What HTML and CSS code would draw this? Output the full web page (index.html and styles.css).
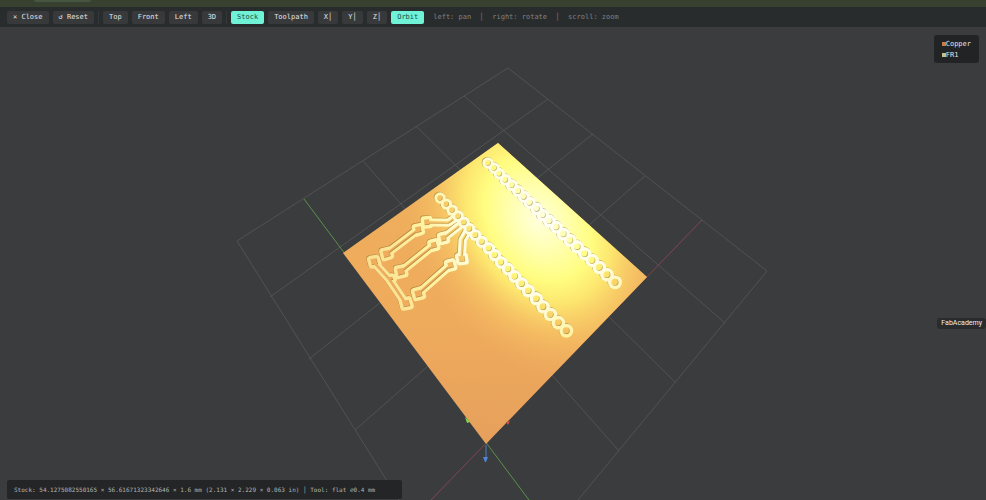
FILE: index.html
```
<!DOCTYPE html>
<html lang="en">
<head>
  <meta charset="UTF-8">
  <meta name="viewport" content="width=device-width, initial-scale=1">
  <title>Stock preview</title>
  <link rel="stylesheet" href="styles.css">
</head>
<body>
  <div class="viewer">
    <div class="top-strip"><span class="tab"></span></div>

    <div class="toolbar">
      <div class="group">
        <button type="button">× Close</button>
        <button type="button">↺ Reset</button>
      </div>
      <div class="group divided">
        <button type="button">Top</button>
        <button type="button">Front</button>
        <button type="button">Left</button>
        <button type="button">3D</button>
      </div>
      <div class="group divided">
        <button type="button" class="active">Stock</button>
        <button type="button">Toolpath</button>
        <button type="button">X│</button>
        <button type="button">Y│</button>
        <button type="button">Z│</button>
        <button type="button" class="active">Orbit</button>
      </div>
      <span class="hint">left: pan &nbsp;│&nbsp; right: rotate &nbsp;│&nbsp; scroll: zoom</span>
    </div>

    <main class="scene">
      <svg class="canvas" viewBox="0 27 986 473" preserveAspectRatio="xMidYMid slice">
        <defs>
          <linearGradient id="copper" gradientUnits="userSpaceOnUse" x1="500" y1="143" x2="486" y2="444">
            <stop offset="0" stop-color="#eeb05c"/>
            <stop offset="0.6" stop-color="#efab5c"/>
            <stop offset="1" stop-color="#e6a05c"/>
          </linearGradient>
          <radialGradient id="glow" gradientUnits="userSpaceOnUse" cx="0" cy="0" r="1" gradientTransform="translate(538 220) rotate(58) scale(172 128)">
            <stop offset="0" stop-color="#ffffdc"/>
            <stop offset="0.18" stop-color="#ffffb4"/>
            <stop offset="0.38" stop-color="#fffd80"/>
            <stop offset="0.52" stop-color="#fff072" stop-opacity="0.85"/>
            <stop offset="0.72" stop-color="#fbd068" stop-opacity="0.5"/>
            <stop offset="1" stop-color="#f2b362" stop-opacity="0"/>
          </radialGradient>
          <radialGradient id="cut" gradientUnits="userSpaceOnUse" cx="540" cy="225" r="190">
            <stop offset="0" stop-color="#fffffa"/>
            <stop offset="0.4" stop-color="#fffde0"/>
            <stop offset="0.6" stop-color="#fff3a2"/>
            <stop offset="1" stop-color="#f9da8c"/>
          </radialGradient>
          <mask id="traces" maskUnits="userSpaceOnUse" x="340" y="140" width="310" height="310">
            <g transform="translate(340 180) scale(0.3333)" fill="none" stroke-linejoin="round">
              <g stroke="#fff" stroke-width="25">
                <path d="M139 222L234 150M260 127L325 128L354 108M181 276L281 196M310 175L371 127M234 342L331 256M365 237L368 180L388 146M101 246L148 298L197 371"/>
              </g>
              <path fill="#fff" stroke="#fff" stroke-width="21" d="M128 214L148 210L152 228L133 234ZM225 142L241 139L245 155L229 160ZM252 119L267 118L269 134L254 136ZM171 267L190 263L195 282L175 287ZM272 189L287 185L291 202L276 206ZM301 168L316 164L320 181L305 185ZM223 334L242 329L248 348L228 353ZM322 249L337 245L342 262L326 266ZM355 229L373 227L376 244L359 246ZM91 238L109 235L114 252L96 256ZM186 363L205 359L211 378L191 382ZM146 292L156 290L160 299L150 302Z"/>
              <g stroke="#000" stroke-width="7">
                <path d="M139 222L234 150M260 127L325 128L354 108M181 276L281 196M310 175L371 127M234 342L331 256M365 237L368 180L388 146M101 246L148 298L197 371"/>
              </g>
              <path fill="#000" d="M128 214L148 210L152 228L133 234ZM225 142L241 139L245 155L229 160ZM252 119L267 118L269 134L254 136ZM171 267L190 263L195 282L175 287ZM272 189L287 185L291 202L276 206ZM301 168L316 164L320 181L305 185ZM223 334L242 329L248 348L228 353ZM322 249L337 245L342 262L326 266ZM355 229L373 227L376 244L359 246ZM91 238L109 235L114 252L96 256ZM186 363L205 359L211 378L191 382ZM146 292L156 290L160 299L150 302Z"/>
            </g>
            <g id="rings"></g>
          </mask>
          <clipPath id="board"><path d="M498 143L647 277L486 444L343 253Z"/></clipPath>
        </defs>

        <g class="grid">
          <path d="M508 68L237 241L399 500M508 68L767 271L578 500"/>
          <path d="M548 99L270 297M593 134L309 359M645 176L355 430"/>
          <path d="M464 96L725 323M416 126L675 382M363 161L619 451"/>
        </g>
        <path class="axis-y" d="M304 199L529 500"/>
        <path class="axis-x" d="M702 220L431 500"/>

        <path fill="url(#copper)" d="M498 143L647 277L486 444L343 253Z"/>
        <g clip-path="url(#board)">
          <rect x="340" y="140" width="310" height="310" fill="url(#glow)"/>
        </g>
        <g transform="translate(-0.6 -0.6)"><rect x="340" y="140" width="310" height="310" fill="#8f7430" opacity="0.6" mask="url(#traces)"/></g>
        <rect x="340" y="140" width="310" height="310" fill="url(#cut)" mask="url(#traces)"/>

        <path class="axis-z" d="M486 445V458"/>
        <path fill="#4d86dc" d="M483 457H488L486 462H485Z"/>
        <path fill="#7be04a" d="M465 417L470 422L467 423Z"/>
        <path fill="#d8503f" d="M506 422L510 421L508 425Z"/>
      </svg>

      <ul class="legend">
        <li><i class="copper"></i>Copper</li>
        <li><i class="fr1"></i>FR1</li>
      </ul>
      <span class="label">FabAcademy</span>
      <div class="status">Stock: 54.1275082550165 × 56.61671323342646 × 1.6 mm (2.131 × 2.229 × 0.063 in) │ Tool: flat ⌀0.4 mm</div>
    </main>
  </div>

<script src="script.js"></script>
</body>
</html>
```
FILE: styles.css
```
* {
  margin: 0;
  padding: 0;
  box-sizing: border-box;
}
body {
  background: #3b3c3e;
  color: #e2e4e4;
  font-family: "DejaVu Sans Mono", monospace;
  font-size: 7px;
  overflow: hidden;
}
.viewer {
  display: flex;
  flex-direction: column;
  height: 100vh;
}
.top-strip {
  height: 7px;
  padding-left: 34px;
  background: #384030;
}
.tab {
  display: block;
  width: 57px;
  height: 2px;
  background: #465640;
  border-radius: 0 0 3px 3px;
}
.toolbar {
  display: flex;
  align-items: center;
  height: 20px;
  padding: 0 7px;
  background: #292c2d;
}
.group {
  display: flex;
  gap: 4px;
}
.divided {
  margin-left: 4px;
  padding-left: 4px;
  border-left: 1px solid #35383a;
}
button {
  height: 13px;
  padding: 0 6px;
  border: 0;
  border-radius: 2px;
  background: #38393b;
  color: #e2e4e4;
  font: inherit;
  line-height: 13px;
  cursor: pointer;
}
button.active {
  background: #6ff2d6;
  color: #1d5048;
}
.hint {
  margin-left: 9px;
  color: #7f8283;
  white-space: nowrap;
}
.scene {
  position: relative;
  flex: 1;
  min-height: 0;
}
.canvas {
  display: block;
  width: 100%;
  height: 100%;
}
.grid {
  fill: none;
  stroke: #5c5c5e;
  stroke-width: 0.7;
}
.axis-x {
  stroke: #8c4550;
  stroke-width: 0.9;
}
.axis-y {
  stroke: #5f9a49;
  stroke-width: 0.9;
}
.axis-z {
  stroke: #4d7cc4;
}
.legend {
  position: absolute;
  top: 8px;
  right: 7px;
  padding: 3px 8px;
  border-radius: 3px;
  background: #222324;
  list-style: none;
}
.legend li {
  display: flex;
  align-items: center;
  height: 11px;
}
.legend i {
  width: 4px;
  height: 4px;
}
.copper {
  background: #c87c48;
}
.fr1 {
  background: #c4c088;
}
.label {
  position: absolute;
  top: 291px;
  right: 0;
  padding: 0 4px;
  border-radius: 3px;
  background: #2a2b2c;
  color: #f0f0f0;
  font-family: Roboto, sans-serif;
  line-height: 11px;
}
.status {
  position: absolute;
  bottom: 1px;
  left: 7px;
  padding: 0 27px 0 7px;
  border-radius: 2px;
  background: #242526;
  color: #b4b6b6;
  font-size: 6px;
  line-height: 19px;
  white-space: nowrap;
}
```
FILE: script.js
```
// drilled rows, [x, y] of each hole
var rows = [
  [[488, 163], [494, 168], [499.3, 173.7], [505.3, 179.7], [511.7, 185], [518, 191], [523.7, 196.7], [529.7, 202.7], [536.7, 208.7], [542.7, 215], [549.3, 221], [556.3, 227], [563.3, 234], [570, 240.3], [577.3, 246.7], [584.7, 253.7], [592, 260.3], [599.3, 267.3], [607, 274.7], [615, 282.3]],
  [[440, 198], [446.3, 204], [452, 210], [458, 216], [463.7, 222.3], [469.3, 228.7], [475.3, 235], [481.7, 241.7], [488.7, 248.3], [494.7, 255], [501, 262.3], [508, 269], [514.7, 276.3], [521.7, 283.7], [528.3, 290.7], [536.3, 298.7], [543, 306.7], [550.3, 314.3], [558.3, 322.7], [566.3, 330.7]]
];

function circle(x, y, r, color) {
  var el = document.createElementNS("http://www.w3.org/2000/svg", "circle");
  el.setAttribute("cx", x);
  el.setAttribute("cy", y);
  el.setAttribute("r", r);
  el.setAttribute("fill", color);
  document.querySelector("#rings").appendChild(el);
}

rows.forEach(function (row) {
  row.forEach(function (p, i) {
    circle(p[0], p[1], 5.7 + i * 0.07, "#fff");
  });
  row.forEach(function (p, i) {
    circle(p[0], p[1], 2.7 + i * 0.04, "#000");
  });
});
```
